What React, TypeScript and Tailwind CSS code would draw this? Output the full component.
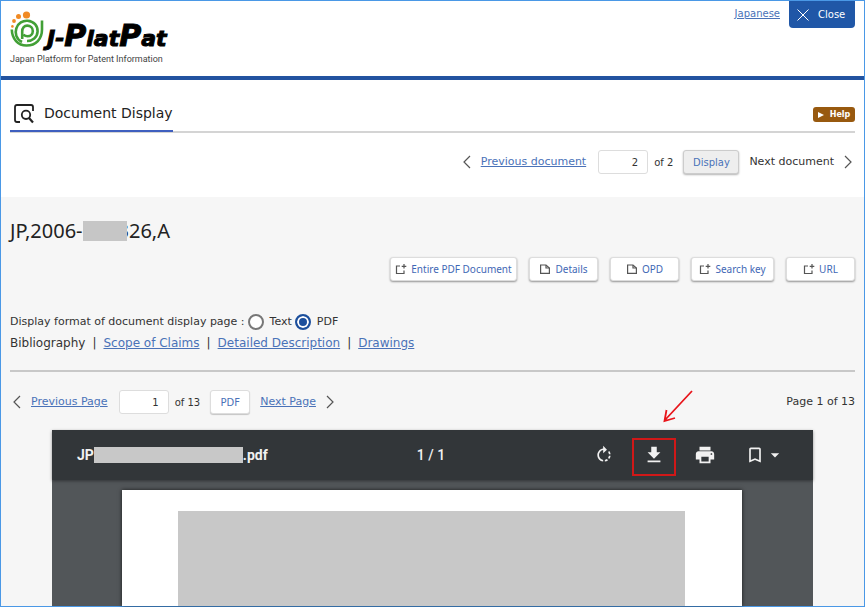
import { useState, type ReactNode } from 'react';
import { MdArrowDropDown, MdBookmarkBorder, MdFileDownload, MdPrint, MdRotateRight } from 'react-icons/md';

const verdana = "font-['Verdana','DejaVu_Sans',sans-serif]";
const noto = "font-['Noto_Sans',sans-serif]";
const link = 'text-[#4a72b8] underline';

function Chevron({ flip = false }: { flip?: boolean }) {
  return (
    <svg viewBox="0 0 8 14" className={`h-[14px] w-2 shrink-0 ${flip ? 'rotate-180' : ''}`} fill="none" stroke="#555" strokeWidth="1.2">
      <path d="M7 1 L1 7 L7 13" />
    </svg>
  );
}

function NewWindowIcon() {
  return (
    <svg viewBox="0 0 12 12" className="h-3 w-3 shrink-0" fill="none" stroke="#555" strokeWidth="1.2">
      <path d="M5 3 H1.5 V10.5 H9 V7.5" />
      <path d="M9 1 V5.6 M6.7 3.3 H11.3" />
    </svg>
  );
}

function FileIcon() {
  return (
    <svg viewBox="0 0 12 12" className="h-3 w-3 shrink-0" fill="none" stroke="#555" strokeWidth="1.2">
      <path d="M1.6 2 H7 L10.4 5 V10.4 H1.6 Z" />
      <path d="M7 2 V5 H10.4" />
    </svg>
  );
}

function ActionButton({ icon, width, children }: { icon: ReactNode; width: string; children: ReactNode }) {
  return (
    <button
      type="button"
      className={`flex h-6 items-center justify-center gap-1 rounded-[3px] border border-[#ddd] bg-white text-[10px] whitespace-nowrap text-[#3f68b5] shadow-[0_1px_2px_rgba(0,0,0,0.4)] ${noto} ${width}`}
    >
      {icon}
      {children}
    </button>
  );
}

function Logo() {
  return (
    <a href="#" className="block text-black">
      <span className="flex h-9 items-end">
        <svg viewBox="0 0 36 36" className="h-9 w-9 shrink-0" fill="none">
          <g fill="#f08a24">
            <circle cx="16.5" cy="4" r="3.6" />
            <circle cx="8.5" cy="5.5" r="2.5" />
            <circle cx="4" cy="10" r="1.9" />
            <circle cx="2.4" cy="15.4" r="1.3" />
          </g>
          <g stroke="#42a036" strokeWidth="2.6">
            <path d="M1.8 18.5 C2 28 8 34.5 16.5 34.5 C26 34.5 32 28 32 18.5 V9.5" />
            <path d="M12 31 C6 28 4.8 22 6.3 17.5 C8 12 13 9.5 17.5 9.8 C24 10.2 27.8 15 27.6 20.5 C27.3 26.5 22.5 30 17 30" />
            <path d="M12.2 28 V20.5 C12.2 16.5 14.4 14.6 17.2 14.6 C20.5 14.6 22.8 17 22.8 20 C22.8 23 20.5 25.2 17.6 25.2 C15.8 25.2 14.5 24.6 13.5 23.6" />
          </g>
        </svg>
        <span className="ml-px font-['DejaVu_Sans',sans-serif] text-[22px] leading-4 font-bold italic [-webkit-text-stroke:1px_black]">
          J-<span className="text-[30px]">P</span>lat
          <span className="text-[30px]">P</span>at
        </span>
      </span>
      <span className="mt-1 block font-['Roboto',sans-serif] text-[9px] leading-4 text-[#444]">
        Japan Platform for Patent Information
      </span>
    </a>
  );
}

export default function App() {
  const [format, setFormat] = useState('pdf');
  const radio =
    'ml-[3px] mr-[6px] h-4 w-4 appearance-none rounded-full border-2 border-[#777] bg-white checked:border-[#1c4f9c] checked:bg-[#1c4f9c] checked:shadow-[inset_0_0_0_2px_#fff]';

  return (
    <div className={`flex min-h-screen flex-col border border-[#4a98e6] bg-white text-[#333] ${verdana}`}>
      {/* Header */}
      <header className="flex h-[79px] items-start justify-between border-b-4 border-[#2253a0] px-[9px]">
        <div className="pt-[10px]">
          <Logo />
        </div>
        <div className="flex items-start gap-[9px]">
          <a href="#" className={`mt-[5px] text-[10px] leading-4 ${link}`}>Japanese</a>
          <button type="button" className="flex h-[27px] w-[66px] items-center gap-[9px] rounded-b bg-[#2057a7] pl-2 text-[10px] text-white">
            <svg viewBox="0 0 12 12" className="h-3 w-3" stroke="white" strokeWidth="1">
              <path d="M0.5 0.5 L11.5 11.5 M11.5 0.5 L0.5 11.5" />
            </svg>
            Close
          </button>
        </div>
      </header>

      {/* Title */}
      <div className="mx-[9px] flex h-[53px] items-end justify-between border-b-2 border-[#d4d4d4]">
        <h1 className="-mb-px flex h-8 items-center gap-[10px] border-b-2 border-[#3f5fbf] pb-[3px] pl-1 text-[14px] text-[#222]">
          <svg viewBox="0 0 20 20" className="h-5 w-5" fill="none" stroke="#222" strokeWidth="1.8">
            <path d="M6 18 H3 Q1 18 1 16 V3 Q1 1 3 1 H17 Q19 1 19 3 V7" />
            <circle cx="12" cy="10.8" r="4.2" />
            <path d="M15 14 L19 18.5" strokeWidth="2.2" />
          </svg>
          Document Display
        </h1>
        <button type="button" className="mb-[9px] flex h-[15px] w-[42px] items-center justify-center gap-[6px] rounded-[3px] bg-[#98590f] text-[8px] font-bold text-white">
          <svg viewBox="0 0 6 6" className="h-[6px] w-[6px]" fill="white"><path d="M0 0 L6 3 L0 6 Z" /></svg>
          Help
        </button>
      </div>

      {/* Document navigation */}
      <nav className="flex h-16 items-center justify-end px-3 pb-[6px] text-[11px]">
        <Chevron />
        <a href="#" className={`ml-[10px] ${link}`}>Previous document</a>
        <input aria-label="Document number" defaultValue="2" className="ml-3 h-6 w-[50px] rounded-[3px] border border-[#ddd] bg-white px-[9px] text-right text-[10px]" />
        <span className="ml-[6px] text-[10px]">of 2</span>
        <button type="button" className="mx-[10px] h-6 w-14 rounded-[3px] border border-[#ccc] bg-[#eee] text-[10px] text-[#4a72b8] shadow-[0_1px_2px_rgba(0,0,0,0.3)]">Display</button>
        <span>Next document</span>
        <span className="ml-[10px] flex"><Chevron flip /></span>
      </nav>

      <main className="flex grow flex-col bg-[#f6f6f6] px-[9px] pt-[22px]">
        <h2 className={`flex h-6 items-center text-[20px] text-[#222] ${noto}`}>
          JP,2006-
          <span className="relative -mr-[9px] h-5 w-11 bg-[#c6c6c6]" />
          326,A
        </h2>

        <div className="mt-[14px] flex justify-end gap-3">
          <ActionButton icon={<NewWindowIcon />} width="w-[127px]">Entire PDF Document</ActionButton>
          <ActionButton icon={<FileIcon />} width="w-[69px]">Details</ActionButton>
          <ActionButton icon={<FileIcon />} width="w-[69px]">OPD</ActionButton>
          <ActionButton icon={<NewWindowIcon />} width="w-[83px]">Search key</ActionButton>
          <ActionButton icon={<NewWindowIcon />} width="w-[69px]">URL</ActionButton>
        </div>

        {/* Display format */}
        <div className="mt-[31px] flex h-5 items-center text-[11px]">
          <span>Display format of document display page :</span>
          <label className="flex items-center">
            <input type="radio" name="format" checked={format === 'text'} onChange={() => setFormat('text')} className={radio} />
            Text
          </label>
          <label className="flex items-center">
            <input type="radio" name="format" checked={format === 'pdf'} onChange={() => setFormat('pdf')} className={radio} />
            PDF
          </label>
        </div>
        <div className="flex h-[22px] items-center gap-[7px] text-[12px]">
          <span>Bibliography</span>
          <span>|</span>
          <a href="#" className={link}>Scope of Claims</a>
          <span>|</span>
          <a href="#" className={link}>Detailed Description</a>
          <span>|</span>
          <a href="#" className={link}>Drawings</a>
        </div>
        <hr className="mt-4 border-t-2 border-[#c8c8c8]" />

        {/* Page navigation */}
        <nav className="mt-[18px] flex h-6 items-center pl-[3px] text-[11px]">
          <Chevron />
          <a href="#" className={`ml-[10px] ${link}`}>Previous Page</a>
          <input aria-label="Page number" defaultValue="1" className="ml-[11px] h-6 w-[50px] rounded-[3px] border border-[#ddd] bg-white px-[9px] text-right text-[10px]" />
          <span className="ml-[6px] text-[10px]">of 13</span>
          <button type="button" className="mx-[10px] h-6 w-10 rounded-[3px] border border-[#ddd] bg-white text-[10px] text-[#4a72b8] shadow-[0_1px_1px_rgba(0,0,0,0.2)]">PDF</button>
          <a href="#" className={link}>Next Page</a>
          <span className="ml-[10px] flex"><Chevron flip /></span>
          <span className="ml-auto">Page 1 of 13</span>
        </nav>

        {/* PDF viewer */}
        <section className="mx-[42px] mt-4 flex grow flex-col bg-[#525659]">
          <div className="grid h-[50px] grid-cols-[1fr_auto_1fr] items-center bg-[#323639] pr-7 pl-[25px] font-['Roboto',sans-serif] text-[14px] font-medium text-[#f1f1f1] shadow-[0_1px_3px_rgba(0,0,0,0.4)]">
            <div className="flex items-center font-bold">
              JP
              <span className="h-4 w-[149px] bg-[#c8c8c8]" />
              .pdf
            </div>
            <span>1 / 1</span>
            <div className="flex items-center justify-end">
              <button type="button" aria-label="Rotate" className="mr-[29px]"><MdRotateRight size={20} /></button>
              <div className="relative mr-[29px] flex">
                <button type="button" aria-label="Download"><MdFileDownload size={22} /></button>
                <span className="pointer-events-none absolute -inset-x-[11px] -top-[6px] -bottom-[10px] border-2 border-[#d01818]" />
                <svg viewBox="0 0 32 34" className="pointer-events-none absolute bottom-[42px] left-5 h-[34px] w-8" fill="none" stroke="#e8151b" strokeWidth="1.8">
                  <path d="M29 1 L2 30 M3.5 20 L1.5 31 L12 28" />
                </svg>
              </div>
              <button type="button" aria-label="Print" className="mr-[29px]"><MdPrint size={22} /></button>
              <button type="button" aria-label="Bookmarks" className="flex items-center"><MdBookmarkBorder size={20} /><MdArrowDropDown size={20} /></button>
            </div>
          </div>
          <div className="mr-[71px] ml-[70px] mt-[10px] flex min-h-[116px] grow flex-col bg-white pr-[57px] pl-14 pt-[21px] shadow-[0_0_4px_rgba(0,0,0,0.7)]">
            <div className="grow bg-[#c8c8c8]" />
          </div>
        </section>
      </main>
    </div>
  );
}
